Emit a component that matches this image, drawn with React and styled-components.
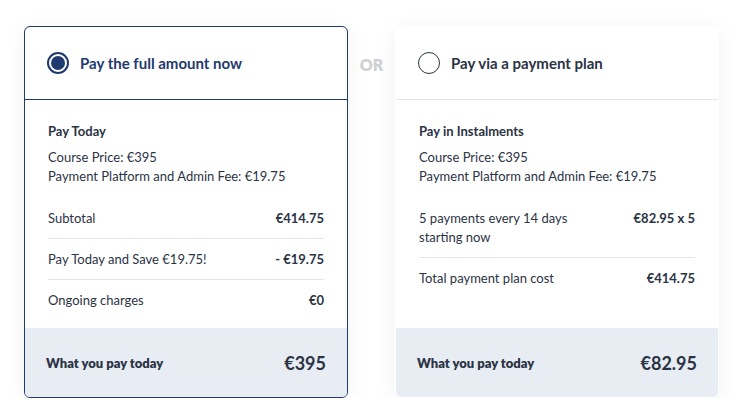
import React from 'react'
import styled, { createGlobalStyle } from 'styled-components'

const Global = createGlobalStyle`
  body {
    margin: 0;
    background: #ffffff;
    font-family: Lato, "Liberation Sans", sans-serif;
    color: #2b3345;
  }
`

const plans = [
  {
    id: 'full',
    title: 'Pay the full amount now',
    selected: true,
    heading: 'Pay Today',
    details: ['Course Price: €395', 'Payment Platform and Admin Fee: €19.75'],
    rows: [
      { label: 'Subtotal', value: '€414.75' },
      { label: 'Pay Today and Save €19.75!', value: '- €19.75' },
      { label: 'Ongoing charges', value: '€0' },
    ],
    total: '€395',
  },
  {
    id: 'plan',
    title: 'Pay via a payment plan',
    selected: false,
    heading: 'Pay in Instalments',
    details: ['Course Price: €395', 'Payment Platform and Admin Fee: €19.75'],
    rows: [
      { label: ['5 payments every 14 days', 'starting now'], value: '€82.95 x 5' },
      { label: 'Total payment plan cost', value: '€414.75' },
    ],
    total: '€82.95',
  },
]

const Page = styled.div`
  display: flex;
  align-items: flex-start;
  padding: 26px 0 0 24px;
`

const Card = styled.div`
  width: 324px;
  height: 372px;
  box-sizing: border-box;
  display: flex;
  flex-direction: column;
  border-radius: 6px;
  border: 1px solid ${(p) => (p.$selected ? '#1f3a6e' : 'transparent')};
  background: #fff;
  box-shadow: 0 4px 22px rgba(0, 0, 0, 0.06);
  overflow: hidden;
`

const Or = styled.div`
  width: 47px;
  height: 76px;
  display: flex;
  align-items: center;
  justify-content: center;
  font-size: 16px;
  font-weight: 800;
  color: #cfd0d3;
`

const Header = styled.div`
  height: 73px;
  box-sizing: border-box;
  display: flex;
  align-items: center;
  gap: 11px;
  padding: 0 22px;
  border-bottom: 1px solid ${(p) => (p.$selected ? '#1f3a6e' : '#e4e6ea')};
`

const Radio = styled.span`
  width: 22px;
  height: 22px;
  box-sizing: border-box;
  border-radius: 50%;
  border: ${(p) => (p.$on ? '2px solid #1f3a6e' : '1.5px solid #2b3345')};
  padding: 2px;
  display: flex;
  &::after {
    content: '';
    flex: 1;
    border-radius: 50%;
    background: ${(p) => (p.$on ? '#1f3a6e' : 'transparent')};
  }
`

const Title = styled.span`
  font-size: 15px;
  font-weight: 700;
  color: ${(p) => (p.$selected ? '#1f3a6e' : '#2b3345')};
`

const Body = styled.div`
  flex: 1;
  padding: 22px 23px 0;
`

const Heading = styled.div`
  font-size: 13px;
  font-weight: 700;
  line-height: 19px;
  margin-bottom: 7px;
`

const Detail = styled.div`
  font-size: 13px;
  line-height: 19px;
`

const Rows = styled.div`
  margin-top: 12px;
`

const Row = styled.div`
  display: flex;
  justify-content: space-between;
  padding: 10.5px 0;
  font-size: 13px;
  line-height: 19px;
  & + & {
    border-top: 1px solid #e4e6ea;
  }
`

const Value = styled.span`
  font-weight: 700;
  white-space: nowrap;
`

const Footer = styled.div`
  height: 69px;
  display: flex;
  align-items: center;
  justify-content: space-between;
  padding: 0 21px;
  background: #e8edf4;
  font-weight: 700;
`

const FooterLabel = styled.span`
  font-size: 13px;
  font-weight: 800;
`

const FooterPrice = styled.span`
  font-size: 18px;
`

const PlanCard = ({ plan }) => (
  <Card $selected={plan.selected}>
    <Header $selected={plan.selected}>
      <Radio $on={plan.selected} />
      <Title $selected={plan.selected}>{plan.title}</Title>
    </Header>
    <Body>
      <Heading>{plan.heading}</Heading>
      {plan.details.map((d) => (
        <Detail key={d}>{d}</Detail>
      ))}
      <Rows>
        {plan.rows.map((r) => (
          <Row key={r.value}>
            <span>
              {Array.isArray(r.label)
                ? r.label.map((l) => <div key={l}>{l}</div>)
                : r.label}
            </span>
            <Value>{r.value}</Value>
          </Row>
        ))}
      </Rows>
    </Body>
    <Footer>
      <FooterLabel>What you pay today</FooterLabel>
      <FooterPrice>{plan.total}</FooterPrice>
    </Footer>
  </Card>
)

export default function App() {
  return (
    <>
      <Global />
      <Page>
        <PlanCard plan={plans[0]} />
        <Or>OR</Or>
        <PlanCard plan={plans[1]} />
      </Page>
    </>
  )
}
